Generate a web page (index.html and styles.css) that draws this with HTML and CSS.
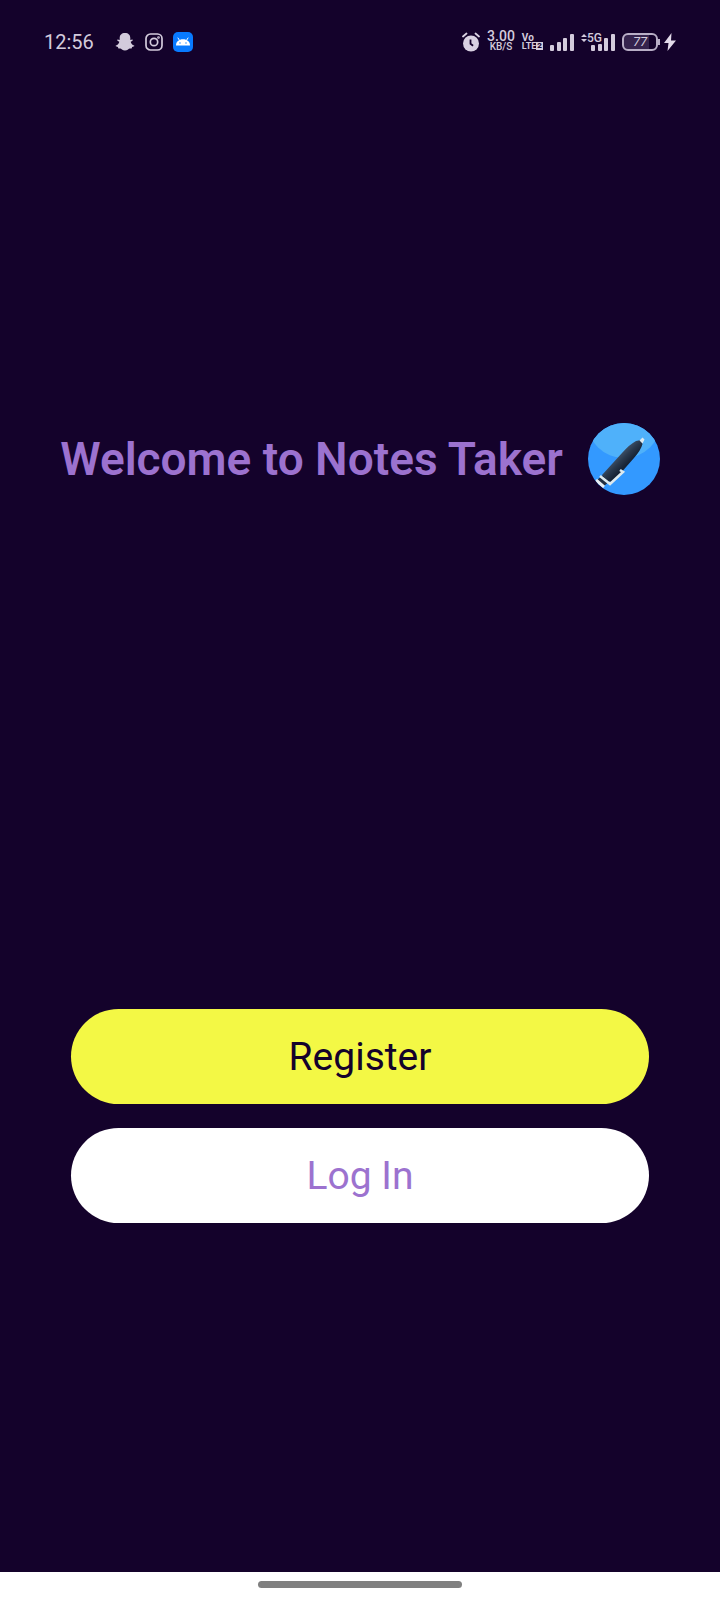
FILE: index.html
```html
<!DOCTYPE html>
<html lang="en">
<head>
<meta charset="utf-8">
<meta name="viewport" content="width=device-width, initial-scale=1">
<title>Notes Taker</title>
<link rel="stylesheet" href="styles.css">
</head>
<body>
<div class="screen">
  <header class="status">
    <div class="status-left">
      <time class="clock">12:56</time>
      <svg class="icon" width="20" height="20" viewBox="0 0 20 20" aria-label="Snapchat"><path fill="#d3cbdc" d="M10 1c3.400 0 5.300 2 5.300 5v2l2-.4c.8.2.6 1-.1 1.300l-1.500.8c.3 1.800 1.500 3.200 3.400 3.900.6.3.2 1.100-2 1.400l-.5 1.600c-2-.4-2.600.1-3.500.8-1.800 1.500-4.400 1.500-6.200 0-.9-.7-1.500-1.200-3.500-.8L2.900 15c-2.200-.3-2.600-1.100-2-1.400 1.900-.7 3.100-2.100 3.400-3.900l-1.500-.8C2.100 8.600 1.900 7.800 2.700 7.600l2 .4V6c0-3 1.900-5 5.300-5z"/></svg>
      <svg class="icon" width="18" height="18" viewBox="0 0 18 18" fill="none" stroke="#d3cbdc" stroke-width="1.700" aria-label="Instagram"><rect x="1" y="1" width="16" height="16" rx="4.500"/><circle cx="9" cy="9" r="3.700"/><circle cx="13.500" cy="4.500" r=".5"/></svg>
      <svg class="icon" width="20" height="20" viewBox="0 0 20 20" aria-label="Android"><rect width="20" height="20" rx="5" fill="#087aff"/><path d="M3 13.500c0-3.900 2.900-6.200 7-6.200s7 2.300 7 6.200z" fill="#fff"/><path d="M5 6l1.600 2.500M15 6l-1.600 2.500" stroke="#fff" stroke-linecap="round"/><circle cx="7" cy="11" r=".7" fill="#087aff"/><circle cx="13" cy="11" r=".7" fill="#087aff"/></svg>
    </div>
    <div class="status-right">
      <svg class="icon" width="18" height="20" viewBox="0 0 18 20" aria-label="Alarm"><circle cx="9" cy="11.500" r="8" fill="#d9d1e2"/><path d="M1 4.500L4.500 1.500M17 4.500L13.500 1.500" stroke="#d9d1e2" stroke-width="1.800" stroke-linecap="round"/><path d="M8.500 7.500v4.300l2.600 2" fill="none" stroke="#14022b" stroke-width="1.800"/></svg>
      <div class="speed"><span>3.00</span><small>KB/S</small></div>
      <div class="volte"><span>Vo</span><span class="lte">LTE<b>2</b></span></div>
      <svg class="icon" width="24" height="18" viewBox="0 0 24 18" fill="#d3cbdc" aria-label="Signal"><rect y="12" width="4" height="6" rx="1"/><rect x="7" y="9" width="4" height="9" rx="1"/><rect x="13" y="5" width="4" height="13" rx="1"/><rect x="20" y="1" width="4" height="17" rx="1"/></svg>
      <svg class="icon" width="34" height="20" viewBox="0 0 34 20" fill="#d3cbdc" aria-label="5G signal"><path d="M0 5l3-3 3 3zM0 7h6l-3 3z"/><text x="6" y="10" font-size="12" font-weight="500">5G</text><rect x="10" y="13" width="4" height="6" rx="1"/><rect x="17" y="12" width="4" height="7" rx="1"/><rect x="23" y="6" width="4" height="13" rx="1"/><rect x="30" y="2" width="4" height="17" rx="1"/></svg>
      <div class="power">
        <span class="battery">77</span>
        <svg class="icon" width="12" height="18" viewBox="0 0 12 18" aria-label="Charging"><path fill="#e3dbea" d="M7.500 0L0 10h4.500L3.500 18 12 7.500H7z"/></svg>
      </div>
    </div>
  </header>
  <main class="content">
    <div class="hero">
      <h1 class="title">Welcome to Notes Taker</h1>
      <svg class="icon" width="72" height="72" viewBox="0 0 72 72" aria-label="Pen">
        <defs>
          <clipPath id="disc"><circle cx="36" cy="36" r="36"/></clipPath>
          <linearGradient id="barrel" x1="26" y1="36" x2="35" y2="45" gradientUnits="userSpaceOnUse"><stop stop-color="#40536a"/><stop offset=".5" stop-color="#29384c"/><stop offset="1" stop-color="#172335"/></linearGradient>
        </defs>
        <g clip-path="url(#disc)">
          <rect width="72" height="72" fill="#3399ff"/>
          <circle cx="36" cy="-2" r="37" fill="#4fb1fa"/>
          <path d="M9 57l7 6 6-5-7-6z" fill="#202d40"/>
          <path d="M8 57l8 7" stroke="#e8eef2" stroke-width="3"/>
          <path d="M14 52L34 30Q42 21 48 18L53 17L54.500 21Q53 27 46 35L24 60z" fill="url(#barrel)"/>
          <path d="M12 53l10 8L35 49l-3-2" fill="none" stroke="#dce9ef" stroke-width="2.600"/>
          <path d="M51.500 17.500l3-3 2 2-2 4z" fill="#dce9ef"/>
        </g>
      </svg>
    </div>
    <div class="actions">
      <button class="button register" type="button">Register</button>
      <button class="button login" type="button">Log In</button>
    </div>
  </main>
  <footer class="navbar"><div class="handle"></div></footer>
</div>
</body>
</html>
```
FILE: styles.css
```css
* {
  box-sizing: border-box;
}

body {
  margin: 0;
  background: #14022b;
  font-family: Roboto, "Liberation Sans", sans-serif;
}

.screen {
  min-height: 100vh;
  display: flex;
  flex-direction: column;
}

.icon {
  display: block;
  flex: none;
}

.status {
  display: flex;
  justify-content: space-between;
  align-items: center;
  height: 83px;
  padding: 0 44px;
  color: #d3cbdc;
}

.status-left,
.status-right,
.power {
  display: flex;
  align-items: center;
}

.status-left {
  gap: 10px;
}

.clock {
  margin-right: 11px;
  font-size: 20px;
  line-height: 24px;
}

.status-right {
  gap: 7px;
}

.speed,
.volte {
  display: flex;
  flex-direction: column;
  align-items: center;
  font-weight: 500;
  font-size: 14px;
  line-height: 11px;
}

.speed small {
  font-size: 10px;
  line-height: 10px;
}

.volte {
  align-items: flex-start;
  font-size: 10px;
  font-weight: 700;
  line-height: 9px;
}

.lte {
  display: flex;
  align-items: center;
  font-size: 9px;
}

.lte b {
  padding: 0 1px;
  background: #d3cbdc;
  color: #14022b;
  font-size: 8px;
  line-height: 8px;
}

.power {
  gap: 6px;
}

.battery {
  position: relative;
  width: 36px;
  height: 18px;
  border: 2px solid #b8aec6;
  border-radius: 6px;
  background: linear-gradient(90deg, #35234d 77%, #14022b 77%);
  font-size: 13px;
  font-style: italic;
  line-height: 14px;
  text-align: center;
}

.battery::after {
  content: "";
  position: absolute;
  top: 4px;
  right: -4px;
  width: 2px;
  height: 6px;
  background: #b8aec6;
}

.content {
  flex: 1;
  padding: 340px 0 0;
}

.hero {
  display: flex;
  justify-content: center;
  align-items: center;
  gap: 25px;
}

.title {
  margin: 0;
  color: #9c72cf;
  font-size: 46px;
  font-weight: 600;
  line-height: 56px;
}

.actions {
  display: flex;
  flex-direction: column;
  gap: 24px;
  margin-top: 514px;
  padding: 0 71px;
}

.button {
  height: 95px;
  border: 0;
  border-radius: 48px;
  font-family: inherit;
  font-size: 39px;
}

.register {
  background: #f3f845;
  color: #14022b;
}

.login {
  background: #fff;
  color: #9c72cf;
}

.navbar {
  display: flex;
  justify-content: center;
  align-items: flex-start;
  height: 28px;
  padding-top: 9px;
  background: #fff;
}

.handle {
  width: 204px;
  height: 7px;
  border-radius: 4px;
  background: #808080;
}
```
